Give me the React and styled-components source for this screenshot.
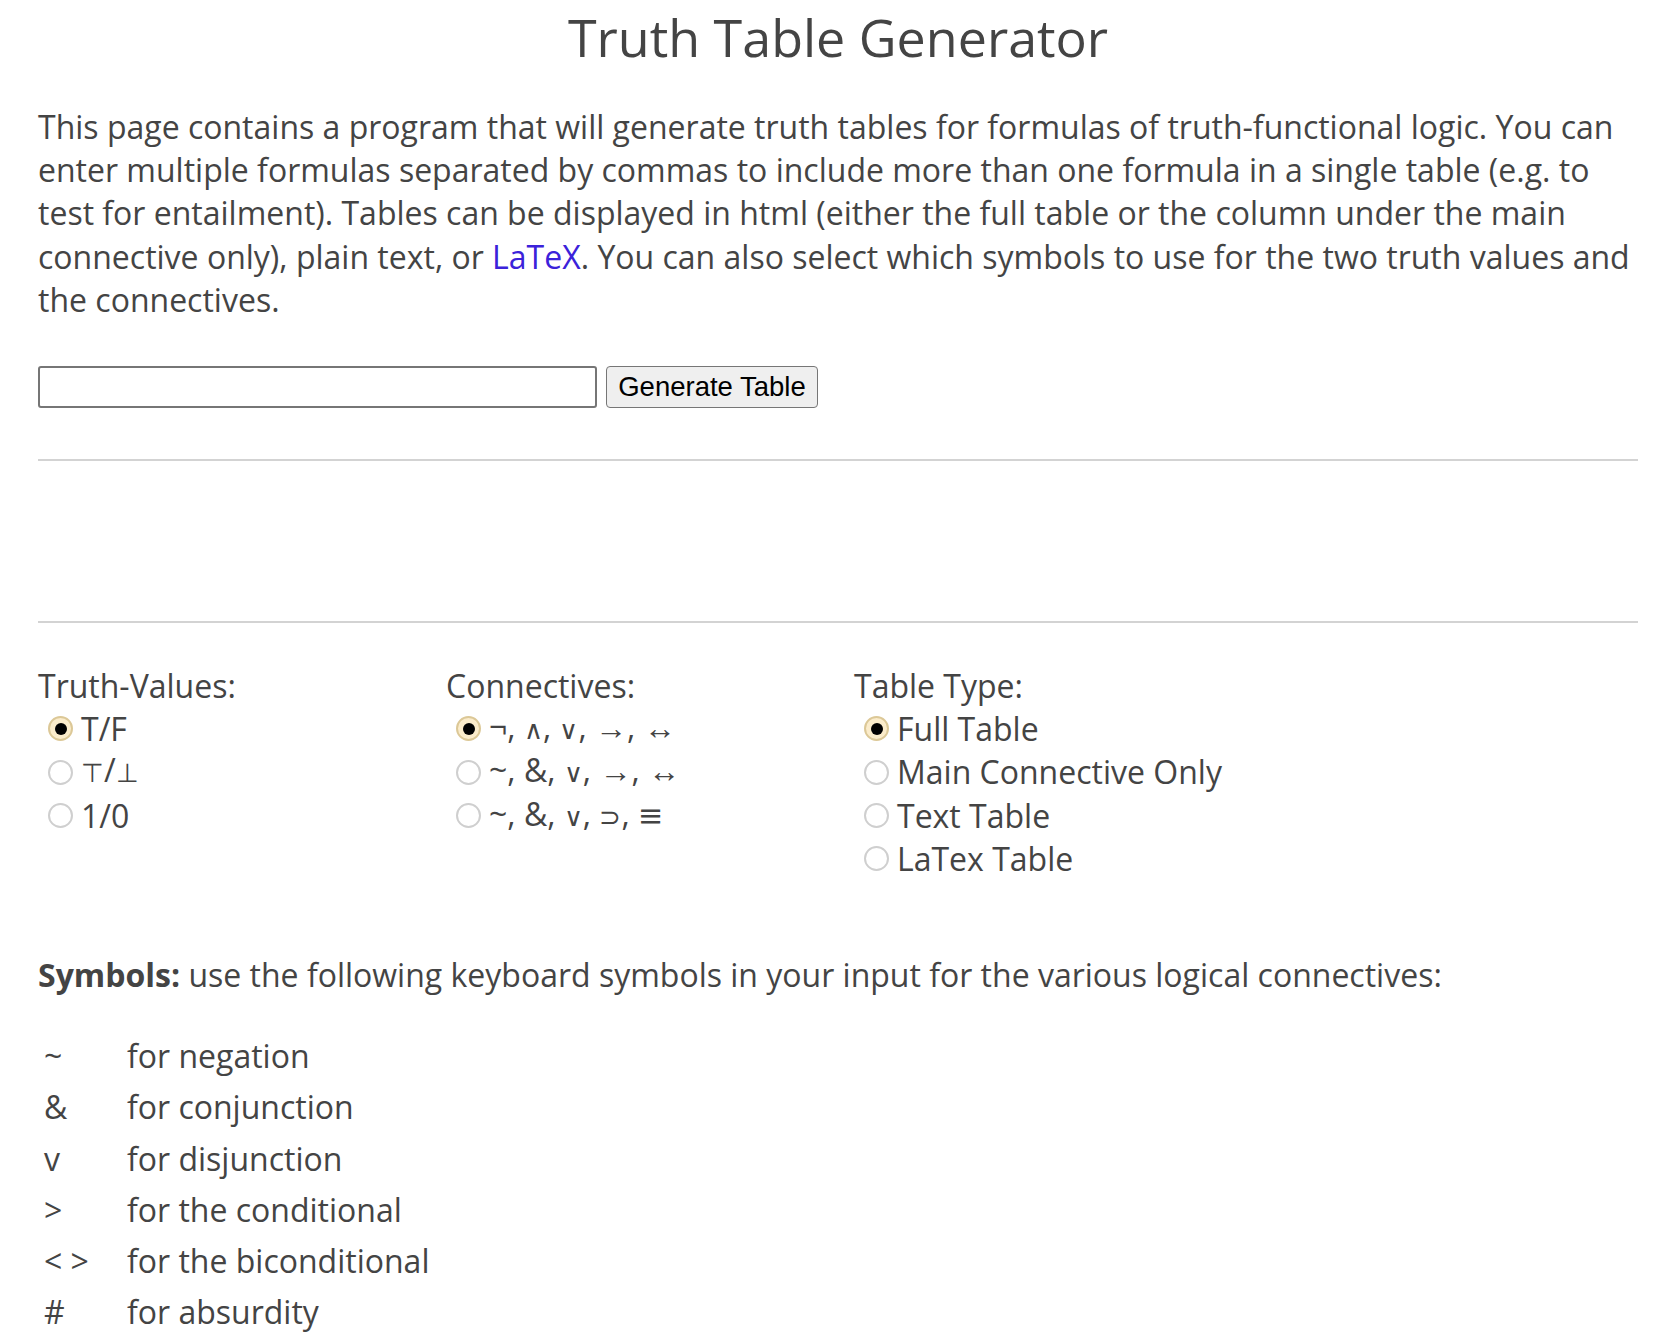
import React from "react"
import styled, { createGlobalStyle } from "styled-components"

const TEXT = "#444444"

const GlobalStyle = createGlobalStyle`
  body {
    margin: 0;
    background: #ffffff;
    color: ${TEXT};
    font-family: "Open Sans", "Liberation Sans", "DejaVu Sans", sans-serif;
  }
`

const truthValues = ["T/F", "⊤/⊥", "1/0"]
const connectives = ["¬, ∧, ∨, →, ↔", "~, &, ∨, →, ↔", "~, &, ∨, ⊃, ≡"]
const tableTypes = ["Full Table", "Main Connective Only", "Text Table", "LaTex Table"]

const THIN = "∧∨⊃⊤⊥"

const symbols = [
  ["~", "for negation"],
  ["&", "for conjunction"],
  ["v", "for disjunction"],
  [">", "for the conditional"],
  ["< >", "for the biconditional"],
  ["#", "for absurdity"],
]

// math glyphs come from a fallback font; give them the lighter look of the original
function Label({ text }) {
  return Array.from(text).map((c, i) => {
    if (THIN.includes(c)) return <ThinSym key={i}>{c}</ThinSym>
    if (c === "≡") return <WideSym key={i}>{c}</WideSym>
    return c
  })
}

function OptionGroup({ title, name, options }) {
  const [value, setValue] = React.useState(0)
  return (
    <Group>
      <GroupTitle>{title}</GroupTitle>
      {options.map((o, i) => (
        <OptionRow key={i}>
          <Radio
            type="radio"
            name={name}
            checked={value === i}
            onChange={() => setValue(i)}
          />
          <OptionText>
            <Label text={o} />
          </OptionText>
        </OptionRow>
      ))}
    </Group>
  )
}

export default function App() {
  return (
    <Page>
      <GlobalStyle />
      <Title>Truth Table Generator</Title>
      <Intro>
        This page contains a program that will generate truth tables for formulas of
        truth-functional logic. You can enter multiple formulas separated by commas to
        include more than one formula in a single table (e.g. to test for entailment).
        Tables can be displayed in html (either the full table or the column under the
        main connective only), plain text, or <Link href="#">LaTeX</Link>. You can also
        select which symbols to use for the two truth values and the connectives.
      </Intro>

      <FormRow>
        <FormulaInput type="text" />
        <GenerateButton>Generate Table</GenerateButton>
      </FormRow>

      <Rule />
      <Results />
      <Rule />

      <Options>
        <OptionGroup title="Truth-Values:" name="tv" options={truthValues} />
        <OptionGroup title="Connectives:" name="conn" options={connectives} />
        <OptionGroup title="Table Type:" name="type" options={tableTypes} />
      </Options>

      <SymbolsNote>
        <strong>Symbols:</strong> use the following keyboard symbols in your input for
        the various logical connectives:
      </SymbolsNote>

      <SymbolTable>
        <tbody>
          {symbols.map(([s, d]) => (
            <tr key={d}>
              <SymbolCell>{s}</SymbolCell>
              <DescCell>{d}</DescCell>
            </tr>
          ))}
        </tbody>
      </SymbolTable>
    </Page>
  )
}

const Page = styled.div`
  width: 1600px;
  margin-left: 38px;
  padding-bottom: 40px;
`

const Title = styled.h1`
  margin: 0;
  padding-top: 1px;
  text-align: center;
  font-size: 52px;
  font-weight: 400;
  line-height: 72px;
  color: ${TEXT};
`

const Intro = styled.p`
  margin: 32px 0 0;
  font-size: 32px;
  line-height: 43.2px;
`

const Link = styled.a`
  color: #3b22da;
  text-decoration: none;
`

const FormRow = styled.div`
  display: flex;
  align-items: center;
  gap: 9px;
  margin-top: 45px;
`

const FormulaInput = styled.input`
  box-sizing: border-box;
  width: 559px;
  height: 42px;
  border: 2px solid #767676;
  border-radius: 3px;
  padding: 0 8px;
  font-size: 24px;
  outline: none;
`

const GenerateButton = styled.button`
  box-sizing: border-box;
  height: 42px;
  width: 212px;
  padding: 0;
  border: 1.5px solid #767676;
  border-radius: 4px;
  background: #efefef;
  color: #000;
  font-family: "Liberation Sans", Arial, sans-serif;
  font-size: 27.5px;
  cursor: pointer;
`

const Rule = styled.hr`
  margin: 51px 0 0;
  height: 2px;
  border: none;
  background: #d3d3d3;
`

const Results = styled.div`
  height: 109px;
`

const Options = styled.div`
  display: grid;
  grid-template-columns: 408px 408px auto;
  margin-top: 41px;
`

const Group = styled.div`
  display: flex;
  flex-direction: column;
  font-size: 32px;
  line-height: 43.2px;
`

const GroupTitle = styled.div``

const OptionRow = styled.label`
  display: flex;
  align-items: center;
  gap: 8px;
  padding-left: 10px;
  height: 43.2px;
`

const Radio = styled.input`
  appearance: none;
  box-sizing: border-box;
  margin: 0;
  width: 25px;
  height: 25px;
  flex-shrink: 0;
  border-radius: 50%;
  border: 2px solid #cfcfcf;
  background: #fff;
  display: grid;
  place-items: center;

  &:checked {
    border-color: #dcc897;
    background: #fbeccb;
  }

  &:checked::after {
    content: "";
    width: 12px;
    height: 12px;
    border-radius: 50%;
    background: #000;
  }
`

const OptionText = styled.span`
  white-space: nowrap;
`

const ThinSym = styled.span`
  font-family: "DejaVu Sans", sans-serif;
  font-weight: 200;
  font-size: 0.8em;
`

const WideSym = styled.span`
  font-family: "DejaVu Sans", sans-serif;
  font-size: 0.95em;
`

const SymbolsNote = styled.p`
  margin: 73px 0 0;
  font-size: 32px;
  line-height: 43.2px;

  strong {
    font-weight: 700;
  }
`

const SymbolTable = styled.table`
  margin-top: 34px;
  border-collapse: collapse;
  font-size: 32px;
  line-height: 43.2px;
`

const SymbolCell = styled.td`
  width: 83px;
  padding: 4px 0 4px 6px;
  white-space: pre;
`

const DescCell = styled.td`
  padding: 4px 0;
`
